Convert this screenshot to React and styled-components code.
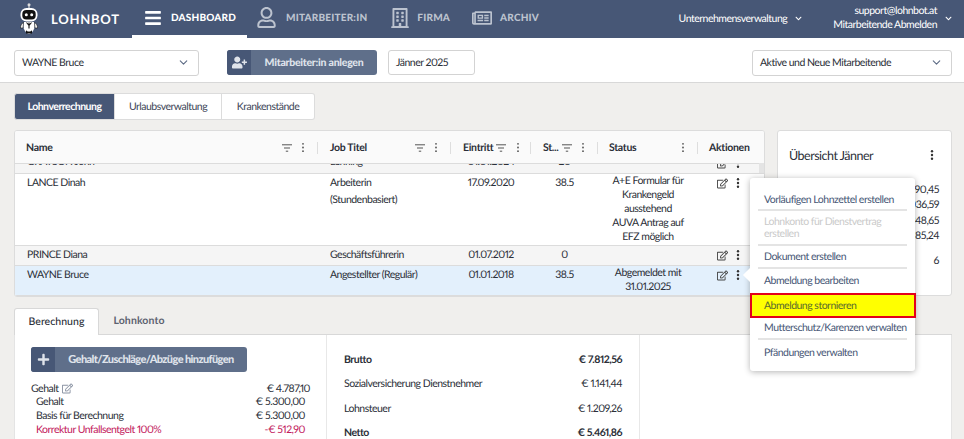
import React from "react";
import styled, { createGlobalStyle } from "styled-components";
import { FaBars, FaRegUser, FaRegBuilding, FaRegNewspaper, FaUserPlus, FaRegEdit, FaPlus, FaChevronDown } from "react-icons/fa";
import { FiChevronDown } from "react-icons/fi";

const Global = createGlobalStyle`
  html, body { margin: 0; padding: 0; background: #f0efed; }
  body {
    font-family: Lato, "Noto Sans", sans-serif; color: #2b2f38; font-size: 10.5px; letter-spacing: -0.5px; width: 964px; height: 439px; overflow: hidden;
    text-rendering: geometricPrecision; font-variant-numeric: proportional-nums;
  }
  * { box-sizing: border-box; }
`;

const Page = styled.div`position: relative; width: 964px; height: 439px; overflow: hidden;`;

const Header = styled.header`
  height: 38px; background: #475776; display: flex; align-items: stretch; color: #fff;
`;
const Brand = styled.div`
  width: 132px; display: flex; align-items: center; padding-left: 19px; gap: 12px;
  font-size: 13px; font-weight: 700; letter-spacing: 0.75px;
`;
const NavItem = styled.div`
  display: flex; align-items: center; gap: ${p => p.$gap ?? 9}px; height: 38px;
  padding: 0 ${p => p.$pr ?? 0}px 0 ${p => p.$pl ?? 12}px;
  font-size: 10px; font-weight: 900; letter-spacing: 0.2px; text-transform: uppercase;
  color: ${p => (p.$active ? "#fff" : "#bcc3cf")};
  border-bottom: 3px solid ${p => (p.$active ? "#fff" : "transparent")};
  svg { flex: none; }
`;
const HeaderRight = styled.div`
  margin-left: auto; display: flex; align-items: center; font-size: 10.5px; color: #fff; padding: 0 12px 1px 0;
`;
const HeaderMenu = styled.div`display: flex; align-items: center; gap: 8px; margin-right: 31px;`;
const UserText = styled.div`text-align: right; line-height: 13.5px; margin-right: 8px;`;

const Toolbar = styled.div`
  height: 45px; background: #fff; border-bottom: 1px solid #d8d8d8; display: flex; align-items: center;
  padding: 5px 12px 0 14px;
`;
const Select = styled.div`
  width: ${p => p.$w}px; height: 26px; margin-right: 28px; padding: 0 8px 0 7px; background: #fff;
  border: 1px solid #d3d3d3; border-radius: 3px; display: flex; align-items: center; justify-content: space-between;
  color: #2b2f38;
  svg { color: #5d6b85; }
`;
const RightSelect = styled(Select)`margin-left: auto; margin-right: 0;`;
const ActionButton = styled.div`
  display: flex; align-items: stretch; width: ${p => p.$w}px; height: 25px; border-radius: 3px; overflow: hidden;
  background: #5f6f8a; color: #dfe3ea; font-weight: 900; font-size: ${p => p.$fs}px; letter-spacing: ${p => p.$ls}px; white-space: nowrap;
`;
const ButtonIcon = styled.span`
  width: 24px; flex: none; background: #475776; display: flex; align-items: center; justify-content: center; color: #dfe3ea;
`;
const ButtonLabel = styled.span`flex: 1; display: flex; align-items: center; justify-content: center;`;
const DateInput = styled.div`
  width: 87px; height: 25px; margin-left: 11px; border: 1px solid #d3d3d3; border-radius: 3px; padding-left: 7px;
  display: flex; align-items: center;
`;

const SegRow = styled.div`display: flex; padding: 10px 0 0 14px;`;
const Seg = styled.div`
  height: 27px; width: ${p => p.$w}px; display: flex; align-items: center; justify-content: center;
  font-weight: ${p => (p.$active ? 700 : 400)};
  background: ${p => (p.$active ? "#475776" : "#fff")}; color: ${p => (p.$active ? "#fff" : "#3d4657")};
  border: 1px solid #dcdcdc; border-left-width: ${p => (p.$first ? 1 : 0)}px;
  border-radius: ${p => (p.$first ? "3px 0 0 3px" : p.$last ? "0 3px 3px 0" : "0")};
`;

const Split = styled.div`display: flex; gap: 12px; padding: 10px 12px 0 14px;`;
const Table = styled.div`
  position: relative; width: 751px; height: 167px; background: #fff; border: 1px solid #dcdcdc; border-radius: 3px; overflow: hidden;
`;
const cols = "303px 133px 80px 67px 100px 66px";
const HeadRow = styled.div`
  display: grid; grid-template-columns: ${cols}; height: 33px; padding-top: 1px; background: #fafafa; border-bottom: 1px solid #dcdcdc; align-items: center;
`;
const HeadCell = styled.div`
  display: flex; align-items: center; height: 12px; padding: 0 ${p => p.$pr ?? 12}px 0 ${p => p.$pl ?? 12}px;
  font-weight: 700; color: #2b2f38; white-space: nowrap; letter-spacing: -0.3px;
  border-right: ${p => (p.$end ? "none" : "1px solid #dedede")};
`;
const HeadLabel = styled.span`flex: ${p => (p.$grow ? 1 : "none")};`;
const HeadIcons = styled.span`display: flex; align-items: center; gap: ${p => p.$gap ?? 6}px; margin-left: ${p => p.$ml ?? 0}px; color: #555;`;

const Row = styled.div`
  display: grid; grid-template-columns: ${cols}; height: ${p => p.$h}px; overflow: hidden;
  background: ${p => p.$bg}; border-bottom: 1px solid #dcdcdc;
  line-height: 17px; align-items: start; color: #2b2f38;
`;
const ClippedRow = styled(Row)`grid-template-rows: 7px; align-items: end;`;
const Cell = styled.div`padding: 1px 0 0 12px; white-space: nowrap;`;
const Center = styled.div`text-align: center; padding-top: 1px;`;
const StatusCell = styled.div`text-align: center; line-height: 14px;`;
const Actions = styled.div`display: flex; align-items: center; gap: 8px; padding: 3px 0 0 19px; color: #444;`;
const ClippedActions = styled(Actions)`margin-bottom: 2px;`;
const Thumb = styled.div`position: absolute; right: 0; top: 32px; width: 5px; height: 10px; background: #e4e4e4;`;

const Card = styled.div`
  width: 175px; height: 166px; background: #fff; border: 1px solid #dcdcdc; border-radius: 3px; padding: 16px 12px 0 11px;
`;
const CardHead = styled.div`display: flex; align-items: center; justify-content: space-between; font-size: 12.5px; color: #2b2f38; margin-bottom: 20px; height: 16px; padding-right: 5px;`;
const CardValue = styled.div`text-align: right; line-height: 15.3px; margin-bottom: ${p => p.$mb ?? 0}px;`;

const TabBar = styled.div`display: flex; margin: 11px 12px 0 14px; height: 27px; border-bottom: 1px solid #d8d8d8;`;
const BTab = styled.div`
  width: ${p => p.$w}px; height: ${p => (p.$active ? 27 : 26)}px; display: flex; align-items: center; justify-content: center;
  letter-spacing: ${p => p.$ls}px; font-weight: ${p => (p.$active ? 500 : 700)};
  background: ${p => (p.$active ? "#fff" : "transparent")}; color: ${p => (p.$active ? "#2b2f38" : "#5d6270")};
  border: ${p => (p.$active ? "1px solid #d8d8d8" : "none")}; border-bottom: none; border-radius: 3px 3px 0 0;
`;
const Panel = styled.div`
  margin: 0 12px 0 14px; background: #fff; border-left: 1px solid #e4e4e4; border-right: 1px solid #e4e4e4; display: flex; height: 110px;
`;
const LeftCol = styled.div`width: 312px; flex: none; padding: 12px 16px 0 16px; border-right: 1px solid #e8e8e8;`;
const AmountRow = styled.div`
  display: flex; justify-content: space-between; line-height: 14px; height: ${p => p.$h ?? 14}px;
  padding: 0 ${p => p.$inset ?? 0}px;
  color: ${p => (p.$red ? "#c2185b" : "#2b2f38")};
`;
const Label = styled.span`display: flex; align-items: center; gap: 4px; svg { color: #8a93a3; }`;
const Gap = styled.div`height: 10px;`;
const MidCol = styled.div`width: 313px; flex: none; padding: 18px 17px 0 17px; border-right: 1px solid #e8e8e8;`;
const SumRow = styled.div`
  display: flex; justify-content: space-between; height: 24.3px; line-height: 14px;
  font-weight: ${p => (p.$bold ? 700 : 400)}; color: #2b2f38;
`;

const Menu = styled.div`
  position: absolute; left: 750px; top: 178px; width: 165px; height: 193px; background: #fff; border-radius: 3px;
  box-shadow: 0 1px 6px rgba(0,0,0,0.3); padding: 9px 8px 0; color: #475776;
  &::before {
    content: ""; position: absolute; left: -5px; top: 92px; width: 10px; height: 10px; background: #fff; transform: rotate(45deg);
  }
`;
const MenuItem = styled.div`
  position: relative; padding: ${p => p.$pt ?? 5}px 6px 0; height: ${p => p.$h}px; line-height: 12px; white-space: nowrap;
  color: ${p => (p.$disabled ? "#cacaca" : "#475776")};
  border-bottom: ${p => (p.$line ? "2px solid #e4e4e4" : "none")};
`;
const MenuHighlight = styled.div`
  position: relative; margin: 0 -9px 0 -8px; height: 25px; background: #ffff00; border: 2px solid #e3001b; padding: 0 12px;
  line-height: 12px; color: #5a6b2f; display: flex; align-items: center;
`;

const Filter = () => (
  <svg width="10" height="8" viewBox="0 0 10 8" fill="none" stroke="#555" strokeWidth="1">
    <path d="M0 .8h10M2 4h6M3.800 7.200h2.400" />
  </svg>
);
const Kebab = ({ c = "#555", r = 0.9, h = 11 }) => (
  <svg width="4" height={h} viewBox={`0 0 4 ${h}`} fill={c}>
    <circle cx="2" cy={h / 2 - 3.7} r={r} /><circle cx="2" cy={h / 2} r={r} /><circle cx="2" cy={h / 2 + 3.7} r={r} />
  </svg>
);
const Robot = () => (
  <svg width="20" height="32" viewBox="0 0 20 32">
    <circle cx="10" cy="1.800" r="1.500" fill="#ddd" />
    <rect x="9.400" y="3" width="1.200" height="3" fill="#ddd" />
    <rect x="1.500" y="5" width="17" height="13.500" rx="6" fill="#fff" />
    <rect x="3.300" y="7" width="13.400" height="9.500" rx="4" fill="#111" />
    <circle cx="7.300" cy="11.800" r="1.500" fill="#fff" /><circle cx="12.700" cy="11.800" r="1.500" fill="#fff" />
    <path d="M5 19h10c1 2.500 1 6-1 9-1 1.500-3 3-4 3s-3-1.500-4-3c-2-3-2-6.500-1-9z" fill="#fff" />
    <path d="M10 19.500v6M7.500 19.500l2.500 3 2.500-3" stroke="#111" strokeWidth="1.100" fill="none" />
    <path d="M7 27c1 2 5 2 6 0v3.500H7z" fill="#111" />
    <path d="M4.500 19.500c-2 1-3 3-3 5.500h2.500zM15.500 19.500c2 1 3 3 3 5.500H16z" fill="#fff" stroke="#111" strokeWidth=".6" />
  </svg>
);

const EditBtn = () => <FaRegEdit size={11} />;
const Dots = () => <Kebab c="#333" r={1.2} h={12} />;

export default function App() {
  return (
    <Page>
      <Global />
      <Header>
        <Brand><Robot />LOHNBOT</Brand>
        <NavItem $active $pl={12} $pr={11}><FaBars size={18} />Dashboard</NavItem>
        <NavItem $pl={9} $gap={9}><FaRegUser size={21} />Mitarbeiter:in</NavItem>
        <NavItem $pl={23} $gap={7}><FaRegBuilding size={20} />Firma</NavItem>
        <NavItem $pl={22} $gap={8}><FaRegNewspaper size={20} />Archiv</NavItem>
        <HeaderRight>
          <HeaderMenu>Unternehmensverwaltung <FaChevronDown size={7} /></HeaderMenu>
          <UserText>support@lohnbot.at<br />Mitarbeitende Abmelden</UserText>
          <FaChevronDown size={7} />
        </HeaderRight>
      </Header>
      <Toolbar>
        <Select $w={185}>WAYNE Bruce <FiChevronDown size={13} /></Select>
        <ActionButton $w={150} $fs={10.5} $ls={-0.25}>
          <ButtonIcon><FaUserPlus size={15} /></ButtonIcon>
          <ButtonLabel>Mitarbeiter:in anlegen</ButtonLabel>
        </ActionButton>
        <DateInput>Jänner 2025</DateInput>
        <RightSelect $w={200}>Aktive und Neue Mitarbeitende <FiChevronDown size={13} /></RightSelect>
      </Toolbar>
      <SegRow>
        <Seg $w={101} $first $active>Lohnverrechnung</Seg>
        <Seg $w={107}>Urlaubsverwaltung</Seg>
        <Seg $w={93} $last>Krankenstände</Seg>
      </SegRow>
      <Split>
        <Table>
          <HeadRow>
            <HeadCell $pl={11}>
              <HeadLabel $grow>Name</HeadLabel>
              <HeadIcons $gap={9}><Filter /><Kebab /></HeadIcons>
            </HeadCell>
            <HeadCell>
              <HeadLabel $grow>Job Titel</HeadLabel>
              <HeadIcons $gap={9}><Filter /><Kebab /></HeadIcons>
            </HeadCell>
            <HeadCell>
              <HeadLabel>Eintritt</HeadLabel>
              <HeadIcons $ml={3}><Filter /></HeadIcons>
              <HeadIcons $ml={10}><Kebab /></HeadIcons>
            </HeadCell>
            <HeadCell>
              <HeadLabel>St...</HeadLabel>
              <HeadIcons $ml={4}><Filter /></HeadIcons>
              <HeadIcons $ml={9}><Kebab /></HeadIcons>
            </HeadCell>
            <HeadCell $pl={11}>
              <HeadLabel $grow>Status</HeadLabel>
              <HeadIcons><Kebab /></HeadIcons>
            </HeadCell>
            <HeadCell $pl={11} $pr={0} $end>Aktionen</HeadCell>
          </HeadRow>
          <ClippedRow $h={10} $bg="#f5f5f5">
            <Cell>GRAYSON John</Cell><Cell>Lehrling</Cell><Center>01.01.2024</Center><Center>20</Center><div />
            <ClippedActions><EditBtn /><Dots /></ClippedActions>
          </ClippedRow>
          <Row $h={72} $bg="#fff">
            <Cell>LANCE Dinah</Cell>
            <Cell>Arbeiterin<br />(Stundenbasiert)</Cell>
            <Center>17.09.2020</Center><Center>38.5</Center>
            <StatusCell>A+E Formular für<br />Krankengeld<br />ausstehend<br />AUVA Antrag auf<br />EFZ möglich</StatusCell>
            <Actions><EditBtn /><Dots /></Actions>
          </Row>
          <Row $h={20} $bg="#f5f5f5">
            <Cell>PRINCE Diana</Cell><Cell>Geschäftsführerin</Cell><Center>01.07.2012</Center><Center>0</Center><div />
            <Actions><EditBtn /><Dots /></Actions>
          </Row>
          <Row $h={30} $bg="#e3f0fc">
            <Cell>WAYNE Bruce</Cell><Cell>Angestellter (Regulär)</Cell><Center>01.01.2018</Center><Center>38.5</Center>
            <StatusCell>Abgemeldet mit<br />31.01.2025</StatusCell>
            <Actions><EditBtn /><Dots /></Actions>
          </Row>
          <Thumb />
        </Table>
        <Card>
          <CardHead>Übersicht Jänner <Dots /></CardHead>
          <CardValue>€ 8.190,45</CardValue>
          <CardValue>€ 1.036,59</CardValue>
          <CardValue>€ 1.348,65</CardValue>
          <CardValue $mb={10}>€ 5.185,24</CardValue>
          <CardValue>6</CardValue>
        </Card>
      </Split>
      <TabBar>
        <BTab $w={85} $ls={0.05} $active>Berechnung</BTab>
        <BTab $w={80} $ls={0.1}>Lohnkonto</BTab>
      </TabBar>
      <Panel>
        <LeftCol>
          <ActionButton $w={216} $fs={11} $ls={-0.6}>
            <ButtonIcon><FaPlus size={13} /></ButtonIcon>
            <ButtonLabel>Gehalt/Zuschläge/Abzüge hinzufügen</ButtonLabel>
          </ActionButton>
          <Gap />
          <AmountRow $h={13}><Label>Gehalt <FaRegEdit size={11} /></Label><span>€ 4.787,10</span></AmountRow>
          <AmountRow $inset={5}><span>Gehalt</span><span>€ 5.300,00</span></AmountRow>
          <AmountRow $inset={5}><span>Basis für Berechnung</span><span>€ 5.300,00</span></AmountRow>
          <AmountRow $inset={5} $red><span>Korrektur Unfallsentgelt 100%</span><span>-€ 512,90</span></AmountRow>
        </LeftCol>
        <MidCol>
          <SumRow $bold><span>Brutto</span><span>€ 7.812,56</span></SumRow>
          <SumRow><span>Sozialversicherung Dienstnehmer</span><span>€ 1.141,44</span></SumRow>
          <SumRow><span>Lohnsteuer</span><span>€ 1.209,26</span></SumRow>
          <SumRow $bold><span>Netto</span><span>€ 5.461,86</span></SumRow>
        </MidCol>
      </Panel>
      <Menu>
        <MenuItem $h={24} $pt={7} $line>Vorläufigen Lohnzettel erstellen</MenuItem>
        <MenuItem $h={35} $line $disabled>Lohnkonto für Dienstvertrag<br />erstellen</MenuItem>
        <MenuItem $h={23} $line>Dokument erstellen</MenuItem>
        <MenuItem $h={24} $pt={6}>Abmeldung bearbeiten</MenuItem>
        <MenuHighlight>Abmeldung stornieren</MenuHighlight>
        <MenuItem $h={22} $pt={4} $line>Mutterschutz/Karenzen verwalten</MenuItem>
        <MenuItem $h={24} $pt={7}>Pfändungen verwalten</MenuItem>
      </Menu>
    </Page>
  );
}
